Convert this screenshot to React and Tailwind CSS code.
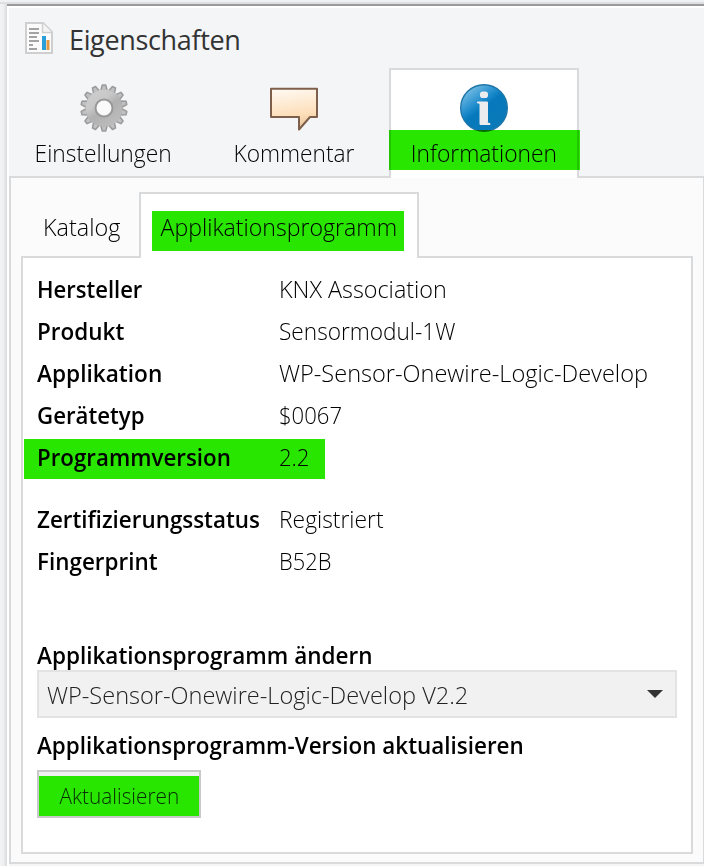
const TEETH = Array.from({ length: 14 }, (_, i) => (i * 360) / 14);

function ReportIcon() {
  return (
    <svg width="28" height="32" viewBox="0 0 28 32" className="block shrink-0">
      <path d="M1 1H18L27 10V31H1Z" fill="#fbfbfb" stroke="#cfcfcf" strokeWidth="2" />
      <path d="M17.500 1V10.500H27" fill="#f4f4f4" stroke="#cfcfcf" strokeWidth="1.500" />
      <path d="M4 7H14M4 11H14M4 15H12M4 19H14M4 23H8M4 27H12" stroke="#a3a3a3" strokeWidth="2.200" />
      <rect x="17" y="14" width="4" height="14" fill="#2a9fd8" />
      <rect x="21.500" y="18" width="3" height="10" fill="#e39a45" />
    </svg>
  );
}

function GearIcon() {
  return (
    <svg width="48" height="48" viewBox="0 0 48 48" className="block">
      <defs>
        <linearGradient id="gear" x1="0" y1="0" x2="0.7" y2="1">
          <stop offset="0" stopColor="#cfcfcf" />
          <stop offset="0.4" stopColor="#c8c8c8" />
          <stop offset="0.6" stopColor="#b0b0b0" />
          <stop offset="1" stopColor="#bdbdbd" />
        </linearGradient>
      </defs>
      {TEETH.map((a) => (
        <path key={a} d="M20.800 6.500L22.300 1H25.700L27.200 6.500Z" transform={`rotate(${a} 24 24)`} fill="#c0c0c0" stroke="#9a9a9a" strokeWidth="1.500" strokeLinejoin="round" />
      ))}
      <circle cx="24" cy="24" r="18.500" fill="url(#gear)" />
      <circle cx="24" cy="24" r="8.500" fill="#fafafa" stroke="#989898" strokeWidth="2" />
    </svg>
  );
}

function CommentIcon() {
  return (
    <svg width="48" height="48" viewBox="0 0 48 48" className="block">
      <defs>
        <linearGradient id="bubble" x1="0" y1="0" x2="0.15" y2="1">
          <stop offset="0" stopColor="#fffaf4" />
          <stop offset="0.7" stopColor="#fddfba" />
          <stop offset="1" stopColor="#e9c79c" />
        </linearGradient>
      </defs>
      <path d="M1 4.800H47V33H40L29 45.500V33H1Z" fill="url(#bubble)" stroke="#7d5f4b" strokeWidth="2" strokeLinejoin="round" />
    </svg>
  );
}

function InfoIcon() {
  return (
    <svg width="48" height="48" viewBox="0 0 48 48" className="block">
      <defs>
        <linearGradient id="info" x1="0.1" y1="0.1" x2="0.7" y2="0.9">
          <stop offset="0" stopColor="#7cc0e6" />
          <stop offset="0.42" stopColor="#1b8acb" />
          <stop offset="0.55" stopColor="#0679bc" />
          <stop offset="1" stopColor="#0a79b8" />
        </linearGradient>
      </defs>
      <circle cx="24" cy="24" r="23.300" fill="url(#info)" stroke="#1f76a8" strokeWidth="1.400" />
      <path d="M17.500 18H27.500V37.500C27.500 39 28.500 39.500 30 39.500V40.500H20V20.500C20 19.500 19 19 17.500 19Z" fill="#ececef" stroke="#ececef" strokeLinejoin="round" />
      <rect x="20" y="7.500" width="8" height="6.500" rx="2.800" fill="#ececef" />
    </svg>
  );
}

function Row({ label, value, labelClass, valueClass, marked }) {
  return (
    <div className="relative flex h-[42px] items-center">
      {marked && <div className="absolute -left-[13px] top-[3px] h-10 w-[301px] bg-[#28e600]" />}
      <div className={`relative w-[242px] shrink-0 origin-left font-semibold ${labelClass}`}>{label}</div>
      <div className={`relative origin-left font-light ${valueClass}`}>{value}</div>
    </div>
  );
}

export default function App() {
  return (
    <div className="flex h-[866px] w-[704px] flex-col overflow-hidden whitespace-nowrap bg-[#f0f1f4] font-['Open_Sans','Noto_Sans',sans-serif] text-[24px] leading-[30px] text-black">
      <div className="h-1 shrink-0 border-b-2 border-[#dedfe1]" />
      <div className="flex flex-1">
        <div className="w-[7px] shrink-0 bg-linear-to-r from-[#f3f4f6] via-[#eeeff1] to-[#d9dadd]" />
        <div className="flex w-[697px] shrink-0 flex-col border-t-2 border-[#9a9a9c] bg-[#f4f5f7]">
          <div className="flex h-[860px] flex-col border-l-2 border-t-2 border-white">
            <header className="flex h-[60px] shrink-0 items-start pl-4 pt-[14px]">
              <ReportIcon />
              <h1 className="ml-4 mt-[3px] text-[27px] font-normal tracking-[-0.35px] text-[#333]">Eigenschaften</h1>
            </header>

            <nav className="relative z-10 -mb-0.5 flex h-[110px] shrink-0">
              <div className="flex w-[189px] flex-col items-center pt-4">
                <GearIcon />
                <span className="mt-[6px] scale-x-[.95] font-light">Einstellungen</span>
              </div>
              <div className="flex w-[191px] flex-col items-center pt-4">
                <CommentIcon />
                <span className="mt-[6px] scale-x-[.945] font-light">Kommentar</span>
              </div>
              <div className="relative flex w-[190px] flex-col items-center border-x-2 border-t-2 border-[#d9dadc] bg-white pt-[14px]">
                <InfoIcon />
                <div className="absolute -left-0.5 top-[60px] h-10 w-[191px] bg-[#28e600] mix-blend-multiply" />
                <span className="relative mt-[6px] scale-x-[.95] font-light">Informationen</span>
              </div>
            </nav>

            <main className="flex h-[688px] w-[696px] shrink-0 flex-col border-2 border-[#d9dadb] bg-[#fbfbfb] px-[10px] pb-[8px] pt-[14px]">
              <nav className="relative z-10 -mb-0.5 flex h-[66px] shrink-0">
                <div className="flex w-[118px] justify-center pl-[3px] pt-[20px] font-light"><span className="scale-x-[.975]">Katalog</span></div>
                <div className="relative flex w-[280px] justify-center border-x-2 border-t-2 border-[#d9dadb] bg-white pt-[18px]">
                  <div className="absolute left-[11px] top-[17px] h-10 w-[252px] bg-[#28e600]" />
                  <span className="relative scale-x-[.963] font-light">Applikationsprogramm</span>
                </div>
              </nav>

              <section className="flex w-[672px] flex-1 flex-col border-2 border-[#d9dadb] bg-white pl-[14px] pt-[10px]">
                <Row label="Hersteller" value="KNX Association" labelClass="scale-x-[.918]" valueClass="scale-x-[.973]" />
                <Row label="Produkt" value="Sensormodul-1W" labelClass="scale-x-[.937]" valueClass="scale-x-[.943]" />
                <Row label="Applikation" value="WP-Sensor-Onewire-Logic-Develop" labelClass="scale-x-[.943]" valueClass="scale-x-[.981]" />
                <Row label="Gerätetyp" value="$0067" labelClass="scale-x-[.926]" valueClass="scale-x-[.92]" />
                <Row label="Programmversion" value="2.2" labelClass="scale-x-[.93]" valueClass="scale-x-[.92]" marked />
                <div className="h-5" />
                <Row label="Zertifizierungsstatus" value="Registriert" labelClass="scale-x-[.933]" valueClass="scale-x-[.952]" />
                <Row label="Fingerprint" value="B52B" labelClass="scale-x-[.935]" valueClass="scale-x-[.91]" />

                <div className="mt-[58px] origin-left scale-x-[.938] font-semibold">Applikationsprogramm ändern</div>
                <div className="flex h-12 w-[640px] items-center justify-between border-2 border-[#e3e3e3] bg-[#f1f1f1] pl-2 pr-3">
                  <span className="origin-left scale-x-[.981] pt-0.5 font-light text-[#222]">WP-Sensor-Onewire-Logic-Develop V2.2</span>
                  <svg width="16" height="8" viewBox="0 0 16 8"><path d="M0 0H16L8 8Z" fill="#333" /></svg>
                </div>
                <div className="mt-3 origin-left scale-x-[.935] font-semibold">Applikationsprogramm-Version aktualisieren</div>
                <button className="mt-[10px] flex h-12 w-[164px] flex-col border-2 border-[#c9c9c9] bg-[#f1f1f1] pt-1">
                  <span className="flex h-10 w-full items-center justify-center bg-[#28e600] pb-0.5 text-[22px] font-light text-[#062c00]">
                    <span className="scale-x-[.945]">Aktualisieren</span>
                  </span>
                </button>
              </section>
            </main>
          </div>
        </div>
      </div>
    </div>
  );
}
